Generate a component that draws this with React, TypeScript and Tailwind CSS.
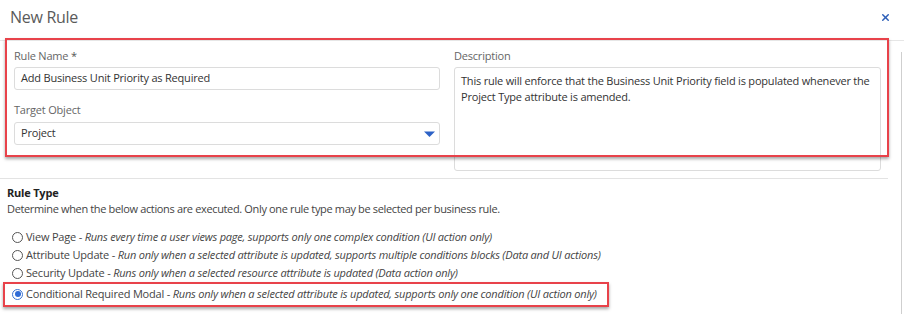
import { X } from 'lucide-react';

const RULE_TYPES = [
  { id: 'view', name: 'View Page', note: 'Runs every time a user views page, supports only one complex condition (UI action only)' },
  { id: 'attr', name: 'Attribute Update', note: 'Run only when a selected attribute is updated, supports multiple conditions blocks (Data and UI actions)' },
  { id: 'sec', name: 'Security Update', note: 'Runs only when a selected resource attribute is updated (Data action only)' },
  { id: 'cond', name: 'Conditional Required Modal', note: 'Runs only when a selected attribute is updated, supports only one condition (UI action only)' },
];

function Radio({ checked }: { checked: boolean }) {
  return checked ? (
    <span className="flex h-[11px] w-[11px] shrink-0 items-center justify-center rounded-full border border-[#3b73d1]">
      <span className="h-[6px] w-[6px] rounded-full bg-[#2f6bd6]" />
    </span>
  ) : (
    <span className="h-[11px] w-[11px] shrink-0 rounded-full border border-[#555]" />
  );
}

export default function App() {
  const selected = 'cond';

  return (
    <div className="relative h-[314px] w-[904px] overflow-hidden bg-white font-['Open_Sans',sans-serif] text-[11px] tracking-[-0.2px] text-[#333]">
      {/* header */}
      <div className="flex h-[41px] items-center justify-between border-b border-[#e6e6e6] pb-[6px] pl-[10px] pr-[13px]">
        <span className="text-[16px] tracking-[-0.3px] text-[#5a5a5a]">New Rule</span>
        <X size={11} strokeWidth={3.2} className="text-[#2d5fb8]" />
      </div>

      <div className="flex">
        <div className="w-[888px]">
          {/* fields */}
          <div className="grid grid-cols-[426px_427px] gap-x-[14px] pl-[14px] pt-[7px]">
            <div className="flex flex-col">
              <label className="mb-[3px] leading-[16px] text-[#666]">
                Rule Name <span className="text-[#555]">*</span>
              </label>
              <div className="flex h-[23px] items-center rounded-[3px] border border-[#dcdcdc] px-[6px]">
                Add Business Unit Priority as Required
              </div>
              <label className="mb-[4px] mt-[12px] leading-[16px] text-[#666]">Target Object</label>
              <div className="flex h-[23px] items-center justify-between rounded-[3px] border border-[#dcdcdc] pl-[6px] pr-[4px]">
                <span>Project</span>
                <svg width="11" height="6" viewBox="0 0 11 6">
                  <path d="M0 0.5 H11 L5.5 6 Z" fill="#2d62c6" />
                </svg>
              </div>
            </div>
            <div className="flex flex-col">
              <label className="mb-[3px] leading-[16px] text-[#666]">Description</label>
              <div className="h-[104px] rounded-[3px] border border-[#dcdcdc] px-[6px] pt-[5px] leading-[16px]">
                <div>This rule will enforce that the Business Unit Priority field is populated whenever the</div>
                <div>Project Type attribute is amended.</div>
              </div>
            </div>
          </div>

          <div className="mt-[7px] border-t border-[#e3e3e3]" />

          {/* rule type */}
          <div className="pl-[7px] pt-[6px]">
            <div className="font-bold leading-[16px] text-[#222]">Rule Type</div>
            <div className="leading-[16px] tracking-[-0.35px] text-[#444]">
              Determine when the below actions are executed. Only one rule type may be selected per business rule.
            </div>
            <div className="mt-[11px] flex flex-col">
              {RULE_TYPES.map((r) => (
                <div
                  key={r.id}
                  className={`flex items-center gap-[3px] pl-[5px] leading-[18px] text-[#444] ${r.id === 'cond' ? 'mt-[3px]' : ''}`}
                >
                  <Radio checked={r.id === selected} />
                  <span>
                    {r.name} - <i>{r.note}</i>
                  </span>
                </div>
              ))}
            </div>
          </div>
        </div>

        {/* scrollbar edge */}
        <div className="flex-1 pl-[13px] pt-[11px]">
          <div className="h-[300px] w-[3px] border-l border-[#cfcfcf]" />
        </div>
      </div>

      {/* annotation boxes */}
      <div className="absolute left-[5px] top-[38px] h-[119px] w-[884px] border-2 border-[#e8424a] shadow-[0_2px_3px_rgba(0,0,0,0.35)]" />
      <div className="absolute left-[3px] top-[282px] h-[25px] w-[606px] border-2 border-[#e8424a] shadow-[0_2px_3px_rgba(0,0,0,0.35)]" />
    </div>
  );
}
